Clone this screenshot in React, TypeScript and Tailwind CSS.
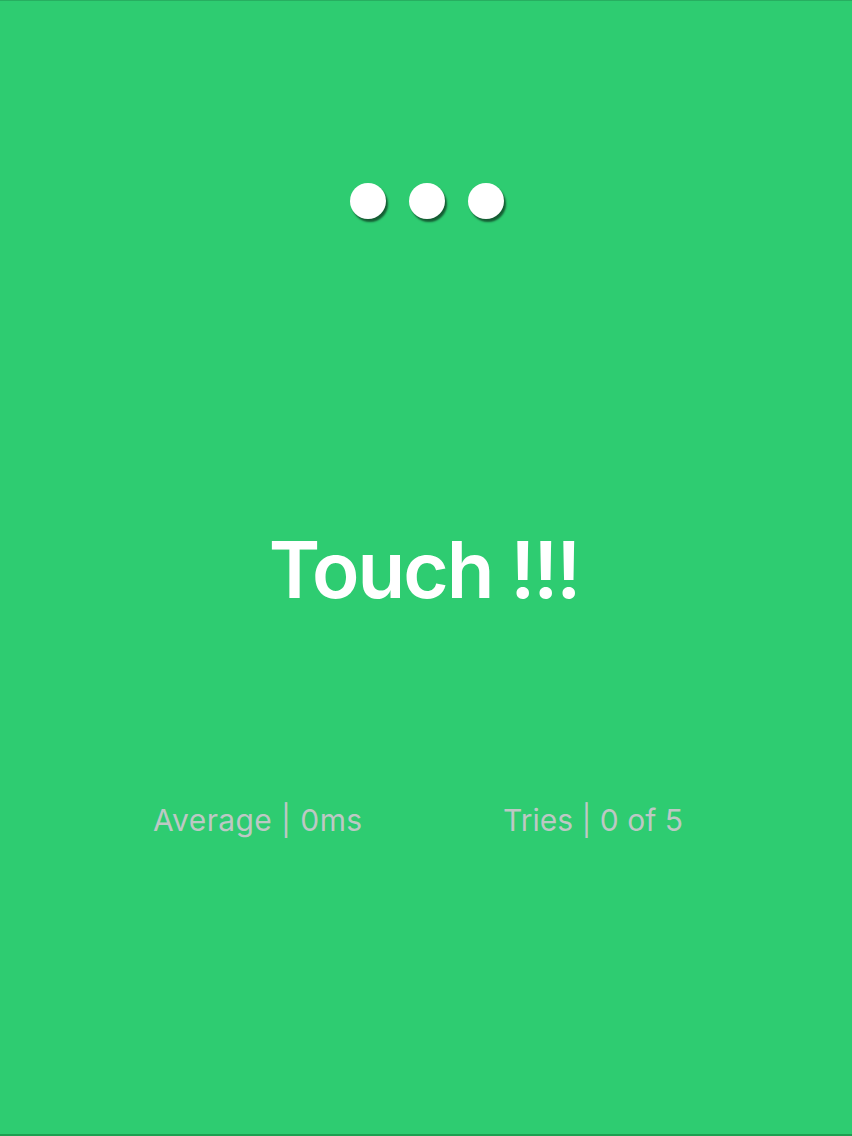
export default function App() {
  return (
    <div
      className="flex h-[1136px] w-[852px] flex-col items-center border-t border-b-2 border-t-[#27ae60] border-b-[#1e9e50] bg-[#2ecc71]"
      style={{ fontFamily: 'Inter, "Liberation Sans", sans-serif' }}
    >
      <div className="mt-[182px] flex gap-[23px] pl-[2px]">
        {[0, 1, 2].map((i) => (
          <div
            key={i}
            className="h-[36px] w-[36px] rounded-full bg-white shadow-[2px_3px_2px_rgba(0,0,0,0.55)]"
          />
        ))}
      </div>
      <h1 className="mt-[312px] pr-[4px] text-[78px] font-semibold leading-none tracking-[-2px] text-white">Touch !!!</h1>
      <div className="mt-[196px] flex w-full justify-between pl-[153px] pr-[169px] text-[30px] leading-none text-[#bdc8c4]">
        <span className="tracking-[0.4px]">Average | 0ms</span>
        <span>Tries | 0 of 5</span>
      </div>
    </div>
  );
}
